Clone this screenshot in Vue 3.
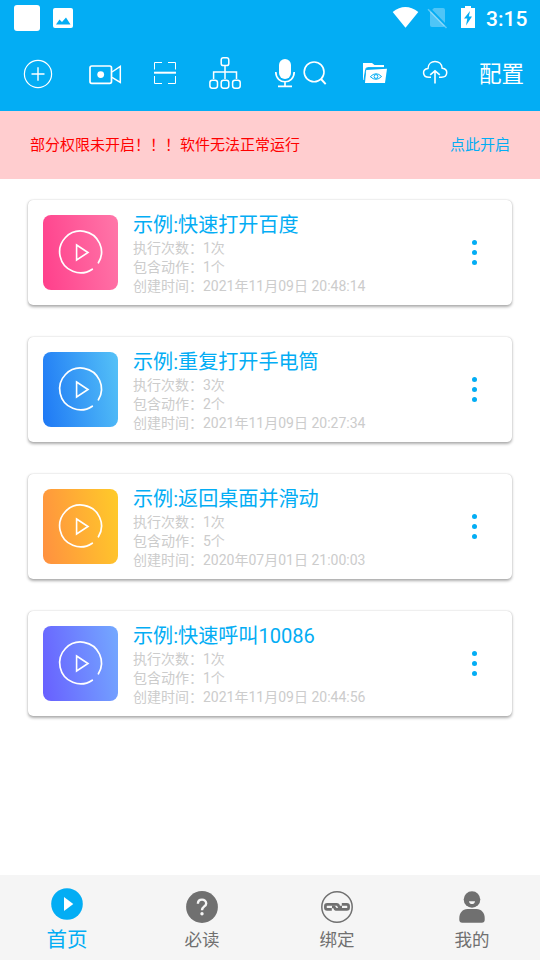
<script setup>
const cards = [
  { title: '示例:快速打开百度', runs: '1次', actions: '1个', time: '2021年11月09日 20:48:14', tone: 'pink' },
  { title: '示例:重复打开手电筒', runs: '3次', actions: '2个', time: '2021年11月09日 20:27:34', tone: 'blue' },
  { title: '示例:返回桌面并滑动', runs: '1次', actions: '5个', time: '2020年07月01日 21:00:03', tone: 'orange' },
  { title: '示例:快速呼叫10086', runs: '1次', actions: '1个', time: '2021年11月09日 20:44:56', tone: 'violet' },
]
</script>

<template>
  <div class="screen">
    <header class="header">
      <div class="status">
        <div class="app-dot"></div>
        <svg class="picture" width="20" height="20" viewBox="0 0 20 20">
          <rect width="20" height="20" rx="2" fill="#fff" />
          <path d="M3 16.5 L6.5 11.5 L9 14 L13 9.5 L17.5 16.5 Z" fill="#03adf4" />
        </svg>
        <svg class="signals" width="84" height="30" viewBox="392 3 84 30">
          <path d="M392.7 12 Q405.3 2 418.3 12 L405.5 27.8 Z" fill="#fff" />
          <path d="M434 8 H443 Q445 8 445 10 V25 Q445 27 443 27 H432 Q430 27 430 25 V12 Z" fill="#fff" opacity=".3" />
          <path d="M429.5 8.5 L448 27.5" stroke="#03adf4" stroke-width="2" />
          <path d="M428 9.2 L446.5 28" stroke="#fff" stroke-width="1.6" opacity=".35" />
          <path d="M465 6 H471 V8 H475 V28 H461 V8 H465 Z" fill="#fff" />
          <path d="M470 11 L464 18.5 H467.3 L466 25.5 L472 16.5 H468.8 Z" fill="#03adf4" />
        </svg>
        <span class="clock">3:15</span>
      </div>

      <div class="toolbar">
        <svg viewBox="16 36 44 75" width="44" height="75">
          <circle cx="38" cy="74" r="13.6" stroke-width="1.2" />
          <path d="M31.5 74 H44.5 M38 67.2 V80.8" stroke-width="1.4" />
        </svg>
        <svg viewBox="60 36 90 75" width="90" height="75">
          <rect x="90" y="66" width="21.5" height="17.3" rx="1.8" stroke-width="1.7" />
          <circle cx="100.7" cy="74.6" r="3.4" fill="#fff" stroke="none" />
          <path d="M112 72 L120.3 66.3 V82.3 L112 77.3" stroke-width="1.5" />
        </svg>
        <svg viewBox="150 36 30 75" width="30" height="75">
          <path d="M154.5 69.5 V62.5 H162 M168 62.5 H175.5 V69.5 M154.5 76 V83.5 H162 M168 83.5 H175.5 V76" stroke-width="1" />
          <path d="M154 72.7 H176" stroke-width="2" />
        </svg>
        <svg viewBox="180 36 90 75" width="90" height="75" stroke-width="1.5">
          <rect x="221.2" y="57.8" width="7.6" height="7.8" rx="2.2" />
          <path d="M225 66 V79 M213.6 79 V72 H236.5 V79" />
          <rect x="209.9" y="80.2" width="7.6" height="8" rx="2.4" />
          <rect x="221.2" y="80.2" width="7.6" height="8" rx="2.4" />
          <rect x="232.6" y="80.2" width="7.6" height="8" rx="2.4" />
        </svg>
        <svg viewBox="270 36 30 75" width="30" height="75">
          <rect x="279" y="59" width="12" height="20" rx="6" fill="#fff" stroke="none" />
          <path d="M275.8 72 C275.8 85 294.2 85 294.2 72 M285 82 V86 M278 86.3 H292" stroke-width="1.7" />
        </svg>
        <svg viewBox="300 36 30 75" width="30" height="75">
          <circle cx="314.1" cy="71.9" r="9.9" stroke-width="1.6" />
          <path d="M321 79 L325.7 84.2" stroke-width="1.9" />
        </svg>
        <svg viewBox="330 36 90 75" width="90" height="75">
          <path d="M363 63 H372 L374.5 65 H384 V68 H366.5 L364.2 77 V80 H363 Z" fill="#fff" stroke="none" />
          <path d="M366.2 70 L387 68.7 L385 83 H365 Z" fill="#fff" stroke="none" />
          <path d="M385 67.6 H367.5 Q366 67.6 365.6 69.5 L364 80" stroke="#03adf4" stroke-width="1" />
          <g stroke="#03adf4" stroke-width="1">
            <path d="M370.3 76.7 Q376 70.9 381.6 76.5 Q376 82 370.3 76.7 Z" />
            <circle cx="376" cy="76.5" r="1.9" />
          </g>
        </svg>
        <svg viewBox="420 36 30 75" width="30" height="75">
          <path d="M431 77.3 H429 C422.2 77.3 421.7 69 428 68.4 C428.3 59.2 441.6 59.2 442.2 68.3 C448.7 69 448 77.3 441.5 77.3 H439" stroke-width="1.5" />
          <path d="M435 83.5 V70.8 M430.2 74.8 L435 70.8 L439.8 74.8" stroke-width="1.6" />
        </svg>
        <span class="config">配置</span>
      </div>
    </header>

    <div class="notice">
      <span>部分权限未开启！！！软件无法正常运行</span>
      <a class="enable">点此开启</a>
    </div>

    <main class="list">
      <article v-for="card in cards" :key="card.title" class="card">
        <div class="thumb" :class="card.tone">
          <svg width="75" height="75" viewBox="0 0 75 75" fill="none" stroke="#fff" stroke-linecap="round">
            <path d="M55.4 47.8 A20.9 20.9 0 1 0 49.3 54.2" stroke-width="1.7" />
            <path d="M33.6 30 L45 37.5 L33.6 45 Z" stroke-width="1.6" stroke-linecap="butt" />
          </svg>
        </div>
        <div class="info">
          <h2>{{ card.title }}</h2>
          <p>执行次数：{{ card.runs }}</p>
          <p>包含动作：{{ card.actions }}</p>
          <p>创建时间：{{ card.time }}</p>
        </div>
        <div class="more"><i></i><i></i><i></i></div>
      </article>
    </main>

    <nav class="tabs">
      <div class="tab active">
        <svg width="32" height="32" viewBox="0 0 32 32">
          <circle cx="16" cy="16" r="15.8" fill="#03adf4" />
          <path d="M13 9 L22.3 16 L13 23 Z" fill="#fff" />
        </svg>
        <span>首页</span>
      </div>
      <div class="tab">
        <svg width="32" height="32" viewBox="0 0 32 32">
          <circle cx="16" cy="16" r="15.9" fill="#707070" />
          <path d="M11.9 12.8 C11.9 7.2 20.2 7.5 20.2 12.4 C20.2 15.5 16 15.4 16 19.2" fill="none" stroke="#f5f5f5" stroke-width="2.4" />
          <circle cx="16" cy="22.7" r="1.7" fill="#f5f5f5" />
        </svg>
        <span>必读</span>
      </div>
      <div class="tab">
        <svg width="32" height="32" viewBox="0 0 32 32" fill="none" stroke="#707070">
          <circle cx="16" cy="16" r="15.2" stroke-width="1.5" />
          <path d="M10.8 18.4 H6.2 Q4.4 18.4 4.4 16.8 V15.1 Q4.4 13.4 6.2 13.4 H15.6 Q17.4 13.4 17.8 15.4 L18.3 16.2 H21" stroke-width="2.7" />
          <path d="M20.8 13.4 H25.8 Q27.6 13.4 27.6 15.1 V16.8 Q27.6 18.4 25.8 18.4 H16 Q14 18.4 13.6 16.6 L13 15.8 H11" stroke-width="2.7" />
        </svg>
        <span>绑定</span>
      </div>
      <div class="tab">
        <svg width="32" height="32" viewBox="0 0 32 32" fill="#707070">
          <circle cx="16" cy="8.5" r="8.3" />
          <path d="M13 10.2 H19 Q18.7 13 16 13 Q13.3 13 13 10.2 Z" fill="#f5f5f5" />
          <path d="M11.5 18 H20.5 C25.5 18 28.7 22 28.7 27 V28.8 Q28.7 31.8 25.7 31.8 H6.3 Q3.3 31.8 3.3 28.8 V27 C3.3 22 6.5 18 11.5 18 Z" />
        </svg>
        <span>我的</span>
      </div>
    </nav>
  </div>
</template>

<style>
body { margin: 0; background: #fff; }
</style>

<style scoped>
.screen {
  display: flex;
  flex-direction: column;
  width: 540px;
  height: 960px;
  overflow: hidden;
  background: #fff;
  font-family: Roboto, "Noto Sans CJK SC", sans-serif;
}
svg { display: block; flex: none; }
.header { height: 111px; background: #03adf4; color: #fff; flex: none; }
.status { display: flex; align-items: center; height: 36px; padding: 0 12px 0 14px; }
.app-dot { width: 26px; height: 26px; border-radius: 3px; background: #fff; }
.picture { margin-left: 13px; }
.signals { margin-left: auto; }
.clock { width: 42px; margin-left: 10px; font-size: 21px; line-height: 36px; font-weight: 500; padding-top: 2px; white-space: nowrap; }
.toolbar {
  display: grid;
  grid-template-columns: 44px 90px 30px 90px 30px 30px 90px 30px 90px;
  height: 75px;
  padding-left: 16px;
}
.toolbar svg { fill: none; stroke: #fff; }
.config { padding-left: 29px; font-size: 22.5px; line-height: 77px; }
.notice {
  display: flex;
  justify-content: space-between;
  align-items: center;
  box-sizing: border-box;
  flex: none;
  height: 68px;
  padding: 0 30px 3px;
  background: #ffcdcf;
  color: #f00;
  font-size: 15px;
}
.enable { color: #03adf4; }
.list { display: flex; flex-direction: column; gap: 32px; padding: 21px 28px 0; flex: 1; }
.card {
  display: flex;
  box-sizing: border-box;
  height: 105px;
  padding: 15px;
  border-radius: 5px;
  background: #fff;
  box-shadow: 0 1.5px 3px rgba(0, 0, 0, .32), 0 0 1px rgba(0, 0, 0, .2);
}
.thumb { width: 75px; height: 75px; border-radius: 8px; flex: none; }
.pink { background: linear-gradient(80deg, #ff3f8b, #ff77a9); }
.blue { background: linear-gradient(80deg, #1e78f5, #55c2f7); }
.orange { background: linear-gradient(80deg, #ff9040, #ffcb29); }
.violet { background: linear-gradient(80deg, #685fff, #74a9ff); }
.info { margin: -5px 0 0 15px; flex: 1; }
h2 { margin: 0; height: 29px; font-size: 20.1px; line-height: 31px; font-weight: 400; color: #03adf4; white-space: nowrap; }
p { margin: 0; font-size: 14px; line-height: 19px; color: #ccc; white-space: nowrap; }
.more {
  display: flex;
  flex-direction: column;
  align-items: center;
  justify-content: center;
  gap: 4.6px;
  width: 5px;
  margin-right: 20px;
}
.more i { width: 5px; height: 5px; border-radius: 50%; background: #03adf4; }
.tabs {
  display: grid;
  grid-template-columns: repeat(4, 135px);
  flex: none;
  box-sizing: border-box;
  height: 85px;
  background: #f5f5f5;
  color: #707070;
}
.tab { display: flex; flex-direction: column; align-items: center; padding: 16px 1px 0 0; font-size: 17.5px; }
.tab span { line-height: 26px; margin-top: 4px; }
.active { padding-top: 13px; color: #03adf4; font-size: 20.5px; }
.active span { line-height: 32px; }
</style>
